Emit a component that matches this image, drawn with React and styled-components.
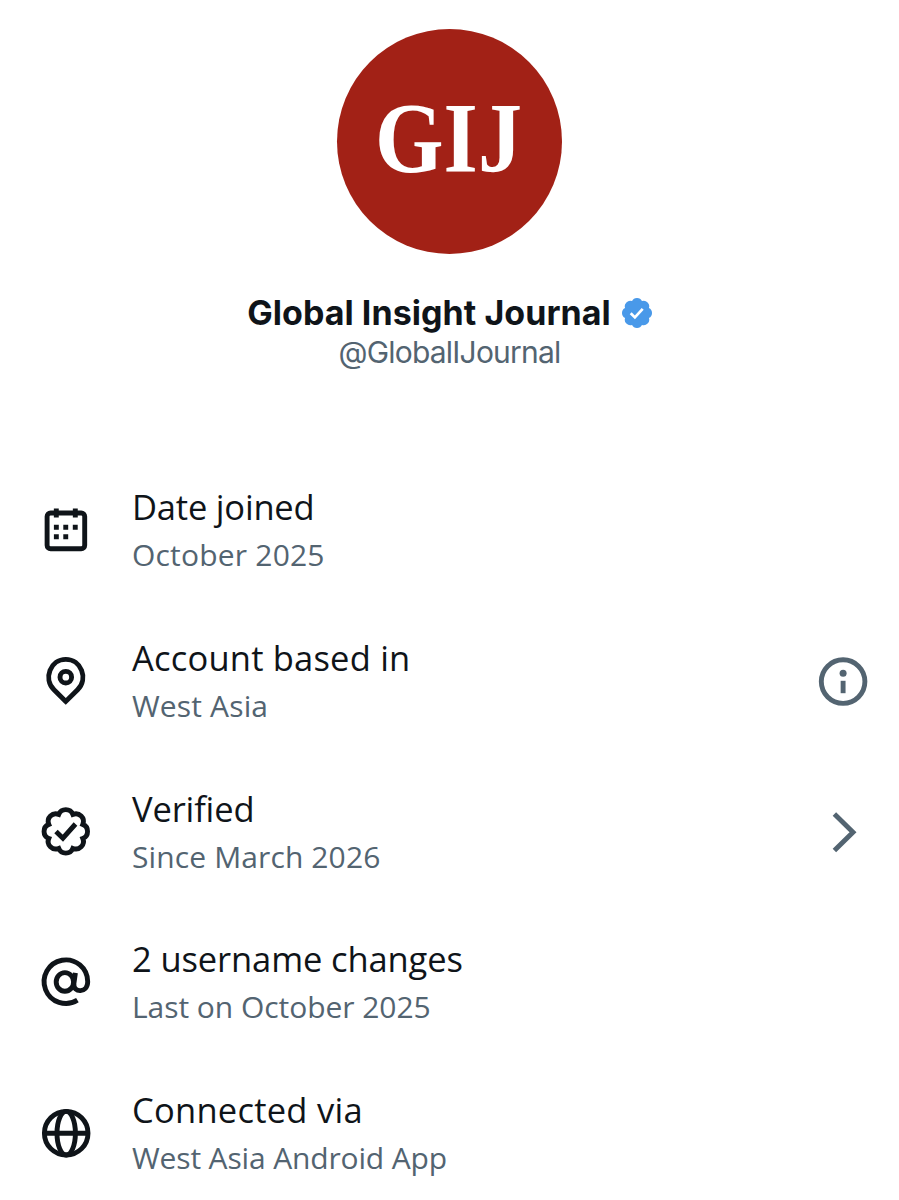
import styled, { createGlobalStyle } from "styled-components";

const GlobalStyle = createGlobalStyle`
  body {
    margin: 0;
    background-color: #fff;
    font-family: "Open Sans", "Noto Sans", sans-serif;
  }
`;

const seal = (cx, cy, ring, r) => {
  // eight round lobes joined around a centre
  const pts = [...Array(8)].map((_, i) => {
    const a = ((i + 0.5) * Math.PI) / 4;
    return `${(cx + ring * Math.cos(a)).toFixed(2)} ${(cy + ring * Math.sin(a)).toFixed(2)}`;
  });
  return `M${pts[7]} ${pts.map((p) => `A${r} ${r} 0 0 1 ${p}`).join(" ")}Z`;
};

const VerifiedBadge = () => (
  <Badge viewBox="0 0 30 30">
    <path d={seal(15, 15, 12.9, 5.5)} fill="#4999e9" />
    <path d="M8.7 15.2l4.2 4.2 7.8-8.6" fill="none" stroke="#fff" strokeWidth="2.7" />
  </Badge>
);

const CalendarIcon = () => (
  <Icon viewBox="0 0 60 60">
    <rect x="11.1" y="13" width="37.6" height="35.8" rx="3.5" />
    <path d="M20.3 8.5v9M39.3 8.5v9" />
    <path d="M17.9 27.3h4.9M27.3 27.3h4.9M36.8 27.3h4.9M17.9 36.7h4.9M27.3 36.7h4.9" />
  </Icon>
);

const PinIcon = () => (
  <Icon viewBox="0 0 60 60">
    <path d="M29.8 50.4L18 38.8C6.8 27.6 14.6 8.4 29.8 8.4s23 19.2 11.8 30.4z" />
    <circle cx="29.8" cy="26.2" r="5.8" />
  </Icon>
);

const SealIcon = () => (
  <Icon viewBox="0 0 60 60">
    <path d={seal(29.8, 29.4, 18.4, 7.6)} />
    <path d="M20 29.5l6.9 6.7 12.6-14.2" />
  </Icon>
);

const AtIcon = () => (
  <Icon viewBox="0 0 60 60">
    <ellipse cx="28.9" cy="29.9" rx="8.7" ry="9.3" />
    <path d="M39.4 20.8l-1.5 10.6c-1 9.8 13.8 10 13.8-1.6A21.8 21.8 0 1 0 41.4 48.2" />
  </Icon>
);

const GlobeIcon = () => (
  <Icon viewBox="0 0 60 60">
    <circle cx="30.2" cy="30.2" r="21.8" />
    <ellipse cx="30.2" cy="30.2" rx="9.2" ry="21.8" />
    <path d="M8 30.2h44" />
  </Icon>
);

const InfoIcon = () => (
  <Icon viewBox="0 0 60 60">
    <circle cx="30.1" cy="30.6" r="21.8" />
    <circle cx="30.1" cy="22.3" r="3.5" fill="currentColor" stroke="none" />
    <path d="M30.1 29.8v12.4" />
  </Icon>
);

const ChevronIcon = () => (
  <Icon viewBox="0 0 60 60">
    <path d="M21.4 12L40 30.2 21.4 48.4" />
  </Icon>
);

const rows = [
  { Glyph: CalendarIcon, title: "Date joined", detail: "October 2025", track: [-0.2, 0.2] },
  { Glyph: PinIcon, title: "Account based in", detail: "West Asia", track: [0.2, 0.15], Action: InfoIcon },
  { Glyph: SealIcon, title: "Verified", detail: "Since March 2026", track: [-0.15, 0.12], Action: ChevronIcon },
  { Glyph: AtIcon, title: "2 username changes", detail: "Last on October 2025", track: [-0.12, -0.05] },
  { Glyph: GlobeIcon, title: "Connected via", detail: "West Asia Android App", track: [0.25, -0.15] },
];

const App = () => {
  return (
    <Page>
      <GlobalStyle />
      <Profile>
        <Avatar>
          <Monogram>GIJ</Monogram>
        </Avatar>
        <NameRow>
          <Name>Global Insight Journal</Name>
          <VerifiedBadge />
        </NameRow>
        <Handle>@GlobalIJournal</Handle>
      </Profile>
      <List>
        {rows.map(({ Glyph, title, detail, track, Action }) => (
          <Row key={title}>
            <Glyph />
            <RowText>
              <Title $track={track[0]}>{title}</Title>
              <Detail $track={track[1]}>{detail}</Detail>
            </RowText>
            {Action && (
              <ActionButton aria-label={title}>
                <Action />
              </ActionButton>
            )}
          </Row>
        ))}
      </List>
    </Page>
  );
};

const Page = styled.main`
  box-sizing: border-box;
  height: 1200px;
  padding-top: 29px;
  overflow: hidden;
  background-color: #fff;
`;

const Profile = styled.header`
  display: flex;
  flex-direction: column;
  align-items: center;
  font-family: Inter, "Open Sans", sans-serif;
`;

const Avatar = styled.div`
  display: flex;
  align-items: center;
  justify-content: center;
  width: 225px;
  height: 225px;
  border-radius: 50%;
  background-color: #a22116;
`;

const Monogram = styled.span`
  margin: 0 2px 9px 0;
  font-family: "Liberation Serif", serif;
  font-size: 99px;
  font-weight: 700;
  line-height: 1;
  color: #fff;
  transform: scaleX(0.89);
`;

const NameRow = styled.div`
  display: flex;
  align-items: center;
  gap: 11px;
  height: 40px;
  margin-top: 39px;
`;

const Name = styled.h1`
  margin: 0;
  font-size: 34px;
  font-weight: 700;
  line-height: 40px;
  letter-spacing: 0.05px;
  white-space: nowrap;
  color: #0f1419;
`;

const Badge = styled.svg`
  width: 30px;
  height: 30px;
`;

const Handle = styled.div`
  font-size: 30px;
  line-height: 38px;
  letter-spacing: -0.8px;
  color: #536471;
`;

const List = styled.div`
  margin-top: 110px;
`;

const Row = styled.div`
  display: flex;
  align-items: center;
  height: 98px;
  padding: 0 26px 0 36px;
  margin-bottom: 52.75px;
  color: #0f1419;
`;

const RowText = styled.div`
  flex: 1;
  padding-top: 2px;
  margin-left: 36px;
`;

const Title = styled.div`
  font-size: 34.5px;
  line-height: 48px;
  letter-spacing: ${(props) => props.$track}px;
  white-space: nowrap;
`;

const Detail = styled.div`
  font-size: 30px;
  line-height: 48px;
  letter-spacing: ${(props) => props.$track}px;
  white-space: nowrap;
  color: #536471;
`;

const ActionButton = styled.button`
  display: flex;
  padding: 0;
  border: none;
  background: none;
  color: #536471;
`;

const Icon = styled.svg`
  flex: none;
  width: 60px;
  height: 60px;
  fill: none;
  stroke: currentColor;
  stroke-width: 4.9;
`;

export default App;
